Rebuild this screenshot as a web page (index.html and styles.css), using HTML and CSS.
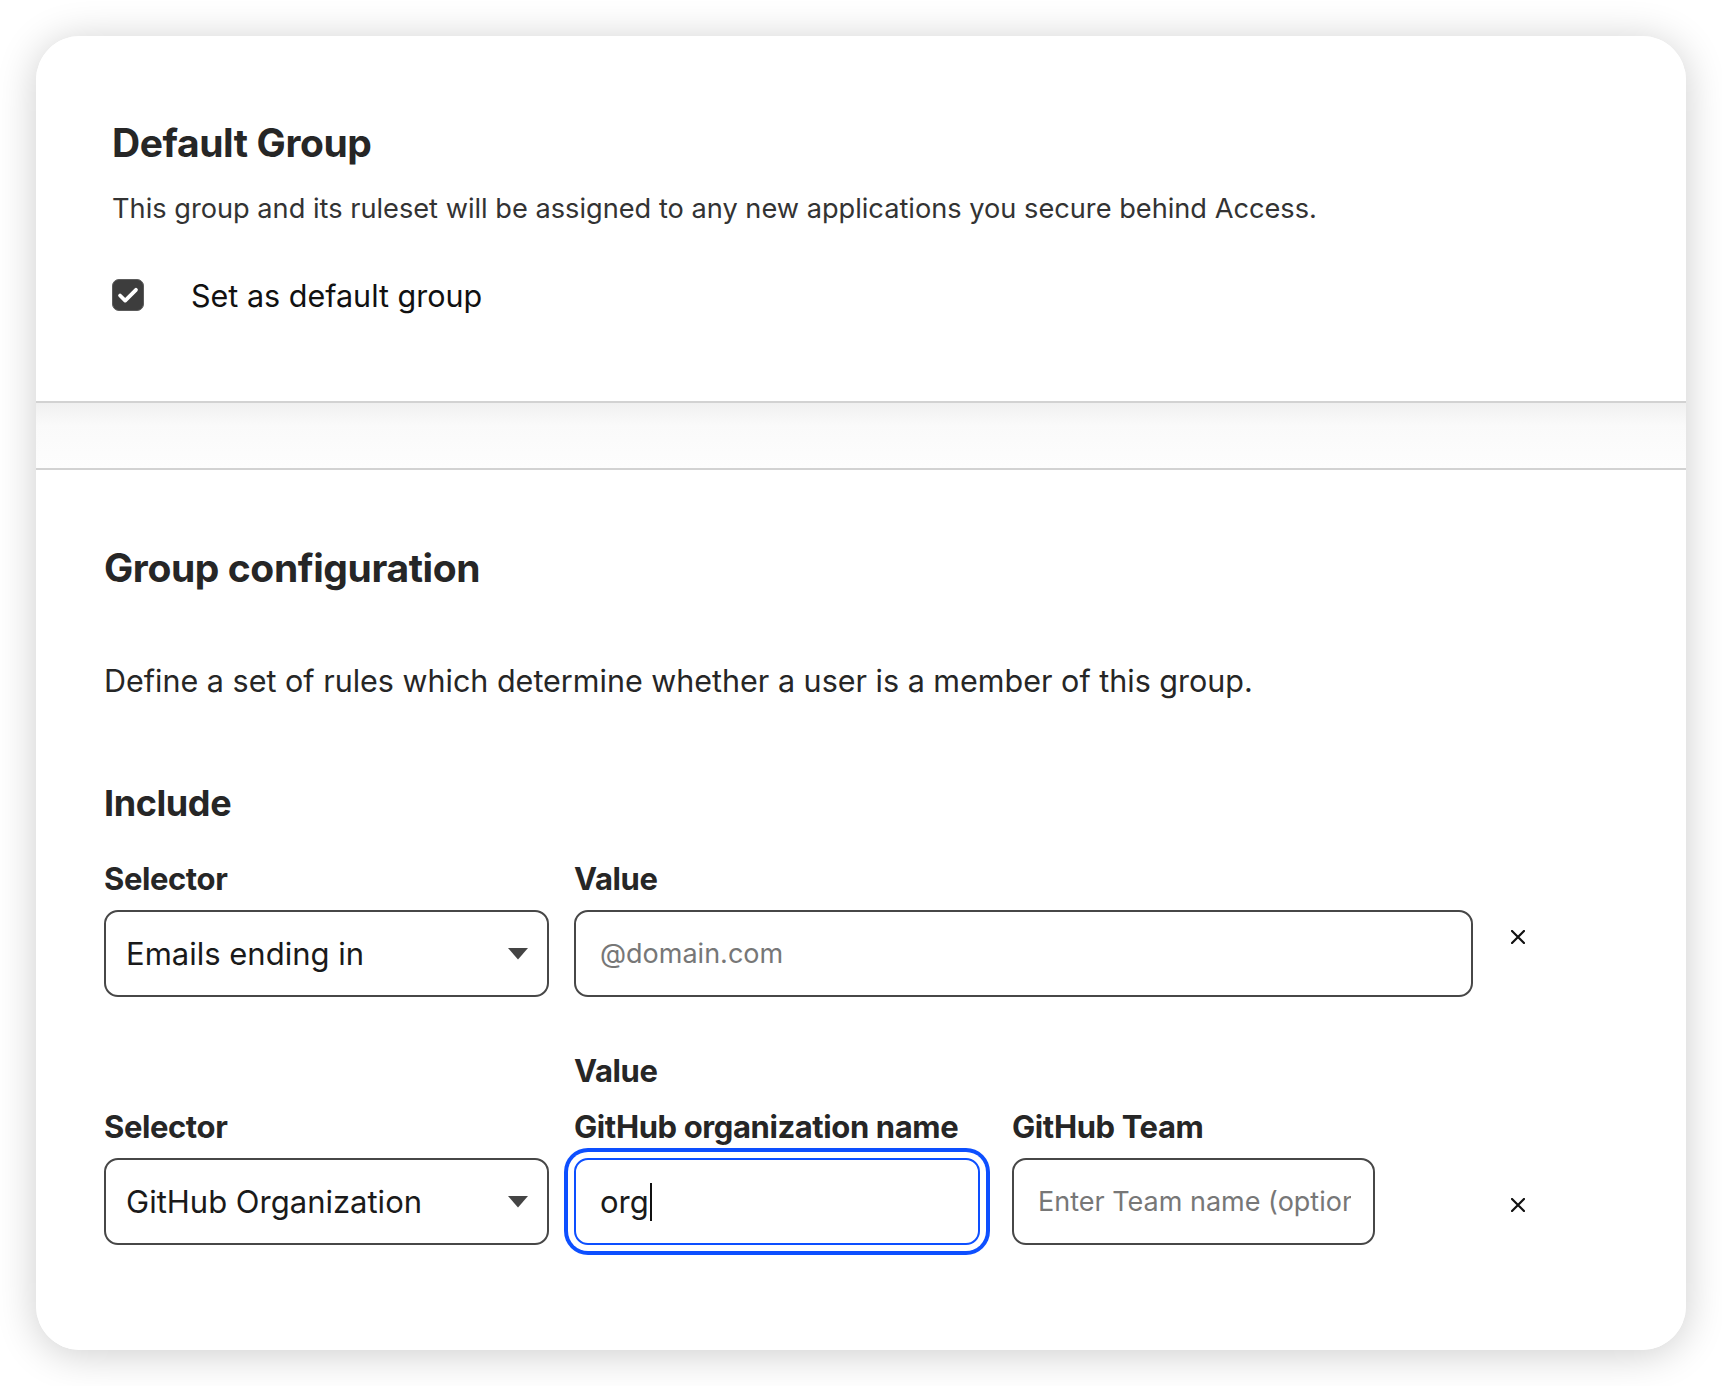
FILE: index.html
```html
<!DOCTYPE html>
<html lang="en">
<head>
<meta charset="utf-8">
<title>Group settings</title>
<link rel="stylesheet" href="styles.css">
</head>
<body>
<div class="card">
  <section class="top">
    <h2 class="title">Default Group</h2>
    <p class="desc">This group and its ruleset will be assigned to any new applications you secure behind Access.</p>
    <label class="check-row">
      <span class="checkbox">
        <svg viewBox="0 0 32 32" width="32" height="32"><path d="M7.5 16.5l5.5 5.5L24.5 10.5" fill="none" stroke="#fff" stroke-width="4" stroke-linecap="round" stroke-linejoin="round"/></svg>
      </span>
      <span class="check-label">Set as default group</span>
    </label>
  </section>
  <div class="band"></div>
  <section class="config">
    <h2 class="title">Group configuration</h2>
    <p class="lead">Define a set of rules which determine whether a user is a member of this group.</p>
    <h3 class="include">Include</h3>

    <div class="rule">
      <div class="field sel">
        <div class="label">Selector</div>
        <div class="select">Emails ending in<svg class="arrow" viewBox="0 0 20 12" width="20" height="12"><path d="M0 0h20L10 11.5z" fill="#444"/></svg></div>
      </div>
      <div class="field val">
        <div class="label">Value</div>
        <input class="input" type="text" placeholder="@domain.com">
      </div>
      <div class="remove mid"><svg viewBox="0 0 14 14" width="14" height="14"><path d="M1 1l12 12M13 1L1 13" stroke="#111" stroke-width="2.2" stroke-linecap="square"/></svg></div>
    </div>

    <div class="rule second">
      <div class="field sel">
        <div class="label">Selector</div>
        <div class="select">GitHub Organization<svg class="arrow" viewBox="0 0 20 12" width="20" height="12"><path d="M0 0h20L10 11.5z" fill="#444"/></svg></div>
      </div>
      <div class="valgroup">
        <div class="label">Value</div>
        <div class="subfields">
          <div class="field org">
            <div class="label">GitHub organization name</div>
            <div class="input focused">org<span class="caret"></span></div>
          </div>
          <div class="field team">
            <div class="label">GitHub Team</div>
            <input class="input" type="text" placeholder="Enter Team name (optional)">
          </div>
        </div>
      </div>
      <div class="remove end"><svg viewBox="0 0 14 14" width="14" height="14"><path d="M1 1l12 12M13 1L1 13" stroke="#111" stroke-width="2.2" stroke-linecap="square"/></svg></div>
    </div>
  </section>
</div>
</body>
</html>
```
FILE: styles.css
```css
* { box-sizing: border-box; }
html, body { margin: 0; padding: 0; background: #fff; }
body {
  font-family: Inter, "Noto Sans", "Liberation Sans", sans-serif;
  color: #262626;
  padding: 36px;
}
.card {
  width: 1650px;
  height: 1314px;
  border-radius: 44px;
  background: #fff;
  box-shadow: 0 4px 40px rgba(0, 0, 0, 0.2);
  overflow: hidden;
  display: flex;
  flex-direction: column;
}
.top {
  height: 367px;
  padding: 85px 76px 0;
  border-bottom: 2px solid #d2d2d2;
  background: #fff;
}
.title {
  margin: 0;
  font-size: 39px;
  line-height: 44px;
  font-weight: 700;
  letter-spacing: -0.4px;
  color: #262626;
}
.desc {
  margin: 28px 0 0;
  font-size: 27.2px;
  line-height: 32px;
  color: #333;
}
.check-row {
  display: flex;
  align-items: center;
  gap: 47px;
  margin-top: 50px;
  height: 40px;
}
.checkbox {
  width: 32px;
  height: 32px;
  border-radius: 7px;
  background: #3d3d3d;
  border: 1.5px solid #5c5c5c;
  display: flex;
  align-items: center;
  justify-content: center;
}
.checkbox svg { width: 30px; height: 30px; }
.check-label {
  font-size: 30.5px;
  color: #111;
}
.band {
  height: 65px;
  background: linear-gradient(#f0f0f0 0, #fafafa 22px, #fdfdfd 100%);
}
.config {
  flex: 1;
  border-top: 2px solid #d2d2d2;
  background: #fff;
  padding: 76px 68px 0;
}
.lead {
  margin: 73px 0 0;
  font-size: 30.5px;
  line-height: 36px;
  color: #262626;
}
.include {
  margin: 84px 0 0;
  font-size: 36px;
  line-height: 40px;
  font-weight: 700;
  letter-spacing: -0.4px;
}
.rule {
  display: flex;
  align-items: flex-end;
  margin-top: 39px;
}
.rule.second { margin-top: 57px; }
.field { display: flex; flex-direction: column; }
.label {
  font-size: 31px;
  line-height: 34px;
  font-weight: 700;
  letter-spacing: -0.4px;
  color: #262626;
  margin-bottom: 14px;
}
.sel { width: 445px; margin-right: 25px; }
.val { width: 899px; }
.select, .input {
  height: 87px;
  border: 2px solid #474747;
  border-radius: 14px;
  background: #fff;
  font-family: inherit;
  font-size: 31px;
  color: #1a1a1a;
  display: flex;
  align-items: center;
  padding: 0 19px 0 20px;
  outline: none;
}
.select { justify-content: space-between; }
input.input {
  display: block;
  width: 100%;
  font-size: 27px;
  padding: 0 22px 0 24px;
}
input.input::placeholder { color: #777; opacity: 1; }
.valgroup { width: 899px; display: flex; flex-direction: column; }
.valgroup > .label { margin-bottom: 22px; }
.subfields { display: flex; gap: 32px; }
.org { width: 406px; }
.team { width: 363px; }
.input.focused {
  border-color: #0d4fff;
  box-shadow: 0 0 0 6px #fff, 0 0 0 10px #0d4fff;
  color: #1a1a1a;
  padding-left: 24px;
}
.caret {
  display: inline-block;
  width: 2px;
  height: 38px;
  background: #111;
  margin-left: 1px;
}
.remove {
  width: 90px;
  display: flex;
  justify-content: center;
  align-items: center;
}
.remove.mid { align-self: center; margin-top: 14px; }
.remove.end { height: 87px; padding-top: 6px; }
```
